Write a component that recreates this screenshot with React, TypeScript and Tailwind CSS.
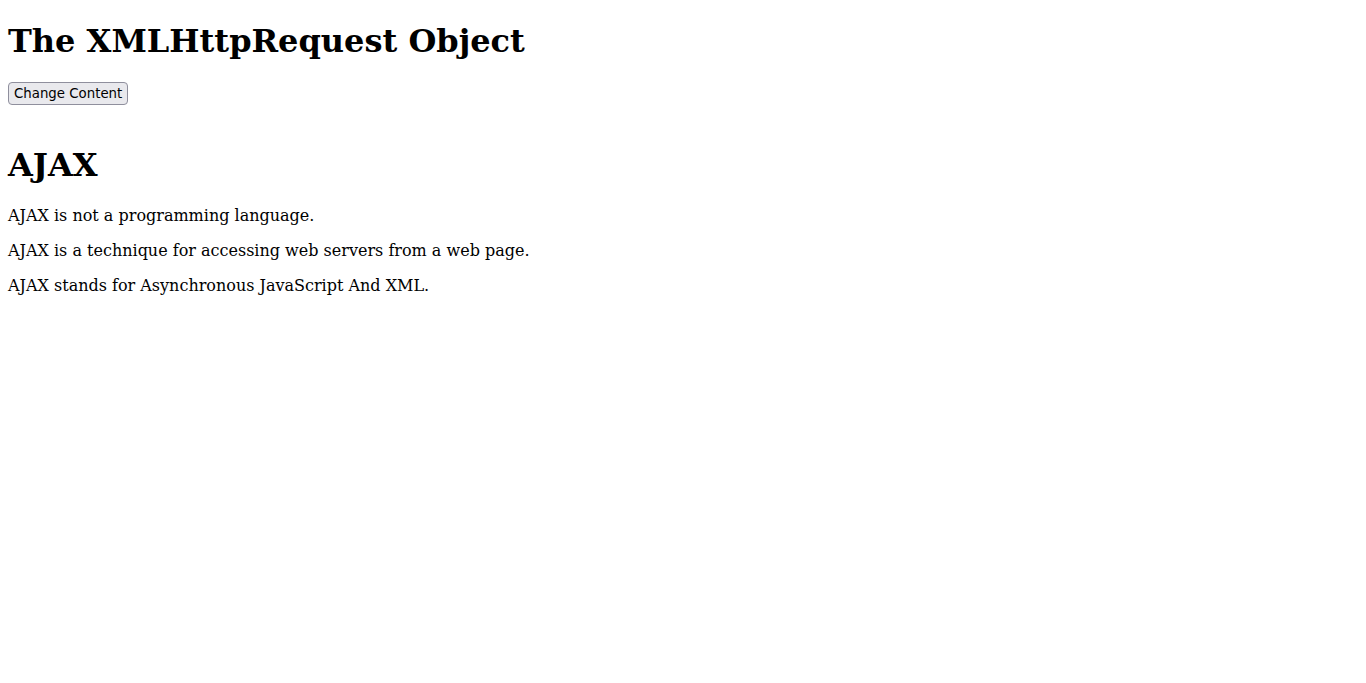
export default function App() {
  const serif = "font-['DejaVu_Serif','Liberation_Serif',serif]";
  return (
    <div className={`min-h-screen bg-white px-2 py-[0.02px] text-black ${serif}`}>
      <h1 className="mt-[22.44px] mb-[20.44px] text-[32px] font-bold leading-[normal]">
        The XMLHttpRequest Object
      </h1>
      <button
        type="button"
        className="h-[23px] rounded-[4px] border border-[#8f8f9d] bg-[#e9e9ed] px-[5px] text-[13.333px] leading-[normal] text-black font-['DejaVu_Sans','Liberation_Sans',sans-serif]"
      >
        Change Content
      </button>
      <div className="mt-[41px]">
        <h1 className="mb-[22.44px] text-[32px] font-bold leading-[normal]">AJAX</h1>
        <p className="my-4 text-base leading-[normal]">AJAX is not a programming language.</p>
        <p className="my-4 text-base leading-[normal]">
          AJAX is a technique for accessing web servers from a web page.
        </p>
        <p className="my-4 text-base leading-[normal]">AJAX stands for Asynchronous JavaScript And XML.</p>
      </div>
    </div>
  );
}
